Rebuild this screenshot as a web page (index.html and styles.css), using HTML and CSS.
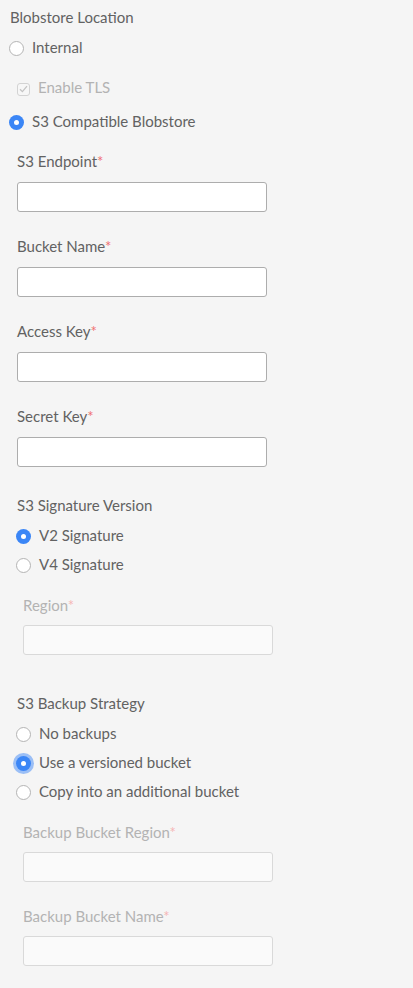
FILE: index.html
```html
<!DOCTYPE html>
<html>
<head>
<meta charset="utf-8">
<link rel="stylesheet" href="styles.css">
</head>
<body>
<div class="page">
  <div class="title">Blobstore Location</div>
  <div class="loc-options">
    <div class="opt"><span class="radio"></span><span>Internal</span></div>
    <div class="opt check disabled"><span class="checkbox"><svg width="9" height="8" viewBox="0 0 9 8"><path d="M1 4.2 L3.4 6.6 L8 1.2" fill="none" stroke="#c4c4c4" stroke-width="1.3"/></svg></span><span>Enable TLS</span></div>
    <div class="opt"><span class="radio checked"></span><span>S3 Compatible Blobstore</span></div>
  </div>

  <div class="s3">
    <div class="field">
      <div class="flabel">S3 Endpoint<span class="req">*</span></div>
      <div class="input"></div>
    </div>
    <div class="field">
      <div class="flabel">Bucket Name<span class="req">*</span></div>
      <div class="input"></div>
    </div>
    <div class="field">
      <div class="flabel">Access Key<span class="req">*</span></div>
      <div class="input"></div>
    </div>
    <div class="field">
      <div class="flabel">Secret Key<span class="req">*</span></div>
      <div class="input"></div>
    </div>

    <div class="group signature">
      <div class="flabel">S3 Signature Version</div>
      <div class="radios">
        <div class="opt"><span class="radio checked"></span><span>V2 Signature</span></div>
        <div class="opt"><span class="radio"></span><span>V4 Signature</span></div>
      </div>
      <div class="field sub disabled">
        <div class="flabel">Region<span class="req">*</span></div>
        <div class="input"></div>
      </div>
    </div>

    <div class="group backup">
      <div class="flabel">S3 Backup Strategy</div>
      <div class="radios">
        <div class="opt"><span class="radio"></span><span>No backups</span></div>
        <div class="opt"><span class="radio checked focus"></span><span>Use a versioned bucket</span></div>
        <div class="opt"><span class="radio"></span><span>Copy into an additional bucket</span></div>
      </div>
      <div class="field sub disabled">
        <div class="flabel">Backup Bucket Region<span class="req">*</span></div>
        <div class="input"></div>
      </div>
      <div class="field sub disabled">
        <div class="flabel">Backup Bucket Name<span class="req">*</span></div>
        <div class="input"></div>
      </div>
    </div>
  </div>
</div>
</body>
</html>
```
FILE: styles.css
```css
html, body {
  margin: 0;
  padding: 0;
  background: #f5f5f5;
}
body {
  font-family: Lato, "Source Sans Pro", "Noto Sans", sans-serif;
  font-size: 15px;
  line-height: 20px;
  color: #626262;
}
.page {
  padding: 7px 0 20px 10px;
  width: 403px;
  height: 961px;
}
.title {
  margin-bottom: 10px;
}
.loc-options {
  margin-left: -1px;
  display: flex;
  flex-direction: column;
}
.opt {
  display: flex;
  align-items: center;
  height: 20px;
  gap: 8px;
}
.loc-options .opt + .opt {
  margin-top: 20px;
}
.loc-options .opt.check + .opt {
  margin-top: 14px;
}
.opt.check {
  margin-left: 8px;
  gap: 8px;
}
.disabled {
  color: #b3b3b3;
}
.radio {
  width: 15px;
  height: 15px;
  border: 1px solid #b4b4b4;
  border-radius: 50%;
  background: #fff;
  flex: none;
  position: relative;
  box-sizing: border-box;
  margin-top: 2px;
}
.radio.checked {
  border: none;
  background: #3b86f6;
}
.radio.checked::after {
  content: "";
  position: absolute;
  left: 5px;
  top: 5px;
  width: 5px;
  height: 5px;
  border-radius: 50%;
  background: #fff;
}
.radio.focus {
  box-shadow: 0 0 0 3px rgba(80, 145, 245, 0.55);
}
.checkbox {
  width: 13px;
  height: 13px;
  border: 1px solid #d3d3d3;
  border-radius: 3px;
  background: #f7f7f7;
  box-sizing: border-box;
  display: flex;
  align-items: center;
  justify-content: center;
  flex: none;
  margin-top: 4px;
}
.s3 {
  margin-left: 7px;
  margin-top: 20px;
  display: flex;
  flex-direction: column;
}
.field {
  display: flex;
  flex-direction: column;
  gap: 11px;
  margin-bottom: 24px;
}
.flabel {
  height: 20px;
}
.req {
  color: #f07070;
}
.disabled .req {
  color: #f5b5b5;
}
.input {
  width: 250px;
  height: 30px;
  box-sizing: border-box;
  border: 1px solid #adadad;
  border-radius: 3px;
  background: #fff;
}
.disabled .input {
  border-color: #d9d9d9;
  background: #fafafa;
}
.group {
  display: flex;
  flex-direction: column;
}
.signature {
  margin-top: 4px;
}
.radios {
  display: flex;
  flex-direction: column;
  gap: 9px;
  margin-top: 10px;
  margin-left: -1px;
}
.sub {
  margin-left: 6px;
  margin-top: 21px;
  margin-bottom: 0;
  gap: 10px;
}
.sub + .sub {
  margin-top: 24px;
}
.backup {
  margin-top: 38px;
}
```
